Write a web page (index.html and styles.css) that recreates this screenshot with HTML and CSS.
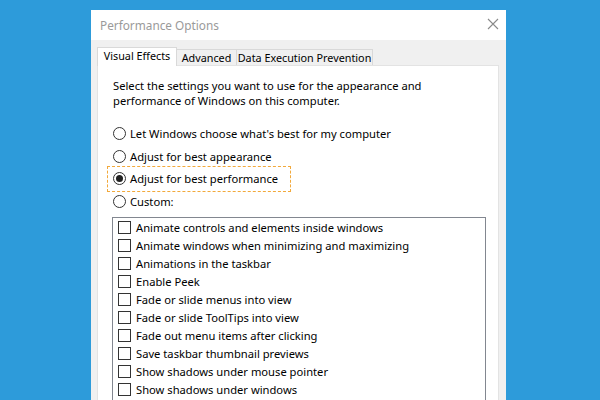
FILE: index.html
```html
<!DOCTYPE html>
<html>
<head>
<meta charset="utf-8">
<link rel="stylesheet" href="styles.css">
</head>
<body>
<div class="dialog">
  <div class="titlebar">
    <span class="title">Performance Options</span>
    <svg class="close" width="12" height="12" viewBox="0 0 12 12"><path d="M1 1L11 11M11 1L1 11" stroke="#8a8a8a" stroke-width="1.1" fill="none"/></svg>
  </div>
  <div class="body">
    <div class="tabs">
      <div class="tab active">Visual Effects</div>
      <div class="tab adv">Advanced</div>
      <div class="tab dep">Data Execution Prevention</div>
    </div>
    <div class="panel">
      <p class="intro">Select the settings you want to use for the appearance and performance of Windows on this computer.</p>
      <div class="radios">
        <div class="radio"><span class="circle"></span><span>Let Windows choose what's best for my computer</span></div>
        <div class="radio"><span class="circle"></span><span>Adjust for best appearance</span></div>
        <div class="radio focused"><span class="circle checked"></span><span>Adjust for best performance</span></div>
        <div class="radio"><span class="circle"></span><span>Custom:</span></div>
      </div>
      <div class="list">
        <div class="item"><span class="box"></span><span>Animate controls and elements inside windows</span></div>
        <div class="item"><span class="box"></span><span>Animate windows when minimizing and maximizing</span></div>
        <div class="item"><span class="box"></span><span>Animations in the taskbar</span></div>
        <div class="item"><span class="box"></span><span>Enable Peek</span></div>
        <div class="item"><span class="box"></span><span>Fade or slide menus into view</span></div>
        <div class="item"><span class="box"></span><span>Fade or slide ToolTips into view</span></div>
        <div class="item"><span class="box"></span><span>Fade out menu items after clicking</span></div>
        <div class="item"><span class="box"></span><span>Save taskbar thumbnail previews</span></div>
        <div class="item"><span class="box"></span><span>Show shadows under mouse pointer</span></div>
        <div class="item"><span class="box"></span><span>Show shadows under windows</span></div>
      </div>
    </div>
  </div>
</div>
</body>
</html>
```
FILE: styles.css
```css
html, body {
  margin: 0;
  padding: 0;
}
body {
  width: 600px;
  height: 400px;
  overflow: hidden;
  background: #2d9bda;
  font-family: "Noto Sans", "Open Sans", sans-serif;
  font-size: 11.2px;
  color: #000;
}
.dialog {
  margin: 10px 0 0 91px;
  width: 415px;
  height: 430px;
  background: #f0f0f0;
  display: flex;
  flex-direction: column;
}
.titlebar {
  height: 30px;
  flex: none;
  background: #fff;
  display: flex;
  align-items: center;
  justify-content: space-between;
  padding: 0 9px 0 9px;
}
.title {
  font-size: 11.8px;
  color: #9a9a9a;
  margin-top: -1px;
}
.close {
  margin-right: -2px;
  margin-top: -2px;
}
.body {
  padding: 7px 7px 0 6px;
  flex: 1;
  display: flex;
  flex-direction: column;
}
.tabs {
  display: flex;
  align-items: flex-end;
  height: 18px;
  position: relative;
  z-index: 1;
}
.tab {
  box-sizing: border-box;
  height: 16px;
  line-height: 15px;
  font-size: 10.8px;
  text-align: center;
  border: 1px solid #d9d9d9;
  border-bottom: none;
  border-left: none;
  background: #f0f0f0;
  white-space: nowrap;
}
.tab.active {
  width: 80px;
  height: 19px;
  line-height: 16px;
  margin-bottom: -1px;
  background: #fff;
  border-left: 1px solid #d9d9d9;
}
.tab.adv {
  width: 60px;
}
.tab.dep {
  width: 136px;
}
.panel {
  flex: 1;
  background: #fff;
  border: 1px solid #e3e3e3;
  padding: 12px 12px 0 15px;
}
.intro {
  margin: 0;
  line-height: 15px;
  width: 320px;
}
.radios {
  margin-top: 14px;
  display: flex;
  flex-direction: column;
}
.radio {
  height: 22.7px;
  display: flex;
  align-items: center;
  gap: 4px;
  position: relative;
}
.radio.focused::before {
  content: "";
  position: absolute;
  left: -6px;
  top: -1px;
  width: 182px;
  height: 24px;
  border: 1px dashed #f2a93b;
}
.circle {
  width: 11px;
  height: 11px;
  border: 1px solid #333;
  border-radius: 50%;
  background: #fff;
  display: flex;
  align-items: center;
  justify-content: center;
  flex: none;
}
.circle.checked::after {
  content: "";
  width: 7px;
  height: 7px;
  border-radius: 50%;
  background: #222;
}
.list {
  margin-top: 4px;
  margin-left: -1px;
  width: 372px;
  height: 200px;
  border: 1px solid #828790;
  padding-top: 1px;
}
.item {
  height: 18px;
  display: flex;
  align-items: center;
  gap: 5px;
  padding-left: 5px;
  white-space: nowrap;
}
.box {
  width: 11px;
  height: 11px;
  border: 1px solid #333;
  background: #fff;
  flex: none;
}
```
